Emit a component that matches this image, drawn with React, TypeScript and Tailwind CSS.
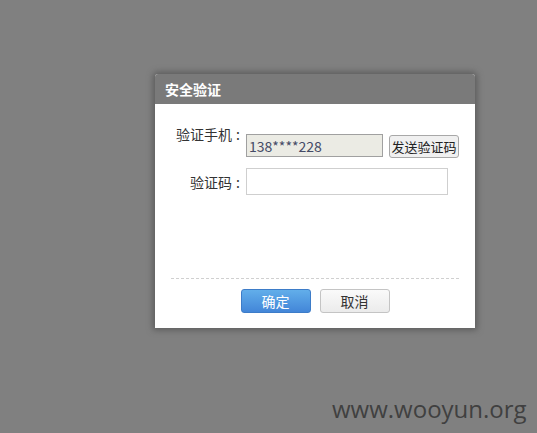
import React from 'react';

const font = { fontFamily: '"Noto Sans CJK SC", "Noto Sans", sans-serif' };

const Label = ({ text }: { text: string }) => (
  <span className="w-[75px] flex justify-end text-[14px] text-[#333] leading-[20px]">
    {text}
    <span className="w-[14px] pl-[4px] text-left">:</span>
  </span>
);

const App = () => {
  return (
    <div className="relative w-full min-h-[433px] bg-[#808080] overflow-hidden" style={font}>
      <div className="ml-[155px] pt-[74px] w-[320px]">
        <div className="bg-white rounded-t-[3px] shadow-[0_0_6px_2px_rgba(60,60,60,0.55)]">
          <div className="h-[30px] bg-[#7a7a7a] rounded-t-[3px] flex items-center px-[10px] text-white text-[14px] font-bold">
            安全验证
          </div>

          <div className="h-[224px] flex flex-col px-[16px]">
            <div className="flex items-start mt-[20px]">
              <Label text="验证手机" />
              <input
                readOnly
                value="138****228"
                className="mt-[10px] w-[137px] h-[23px] border border-[#a0a0a0] bg-[#ebebe4] px-[2px] text-[14px] text-[#444a66] outline-none"
              />
              <button className="ml-[6px] mt-[11px] w-[70px] h-[23px] rounded-[3px] border border-[#a8a8a8] bg-[#f0f0f0] text-[13px] text-[#222] leading-none">
                发送验证码
              </button>
            </div>

            <div className="flex items-center mt-[10px]">
              <Label text="验证码" />
              <input className="w-[202px] h-[27px] border border-[#cfcfcf] bg-white outline-none" />
            </div>

            <div className="mt-[83px] border-t border-dashed border-[#d0d0d0]" />

            <div className="flex justify-center gap-[9px] mt-[10px]">
              <button className="w-[70px] h-[24px] rounded-[3px] border border-[#3d7cc8] bg-gradient-to-b from-[#62aeea] to-[#4386d8] text-white text-[14px] leading-none">
                确定
              </button>
              <button className="w-[70px] h-[24px] rounded-[3px] border border-[#c4c4c4] bg-gradient-to-b from-[#fafafa] to-[#ebebeb] text-[#333] text-[14px] leading-none">
                取消
              </button>
            </div>
          </div>
        </div>
      </div>

      <div
        className="absolute left-[332px] top-[391px] text-[24px] text-[#404040]"
        style={{ fontFamily: '"Open Sans", "DejaVu Sans", sans-serif' }}
      >
        www.wooyun.org
      </div>
    </div>
  );
};

export default App;
